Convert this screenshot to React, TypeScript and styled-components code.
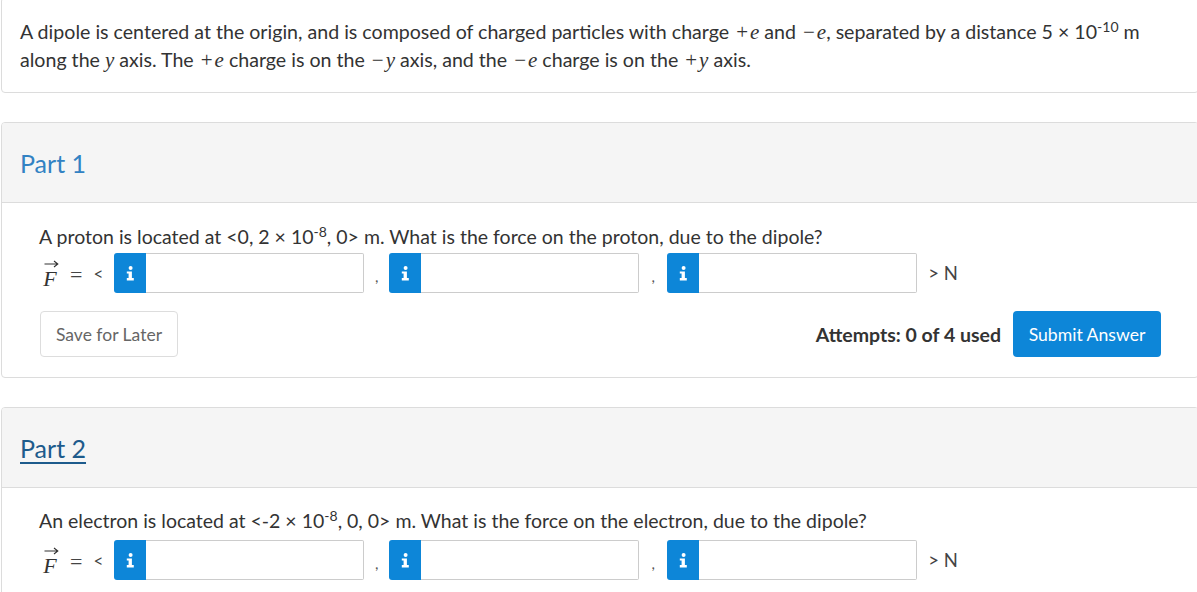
import React from "react";
import styled, { createGlobalStyle } from "styled-components";

const GlobalStyle = createGlobalStyle`
  html, body {
    margin: 0;
    padding: 0;
    background: #ffffff;
    overflow: hidden;
  }
  body {
    font-family: Lato, "Noto Sans", "Liberation Sans", sans-serif;
    color: #333333;
  }
  * { box-sizing: border-box; }
`;

const Page = styled.div`
  width: 1199px;
  padding-left: 1px;
  display: flex;
  flex-direction: column;
  gap: 29px;
`;

const Card = styled.section<{ $lead?: boolean }>`
  width: 1198px;
  border: 1px solid #dcdcdc;
  border-radius: 4px;
  background: #ffffff;
  margin-top: ${(p) => (p.$lead ? "-3px" : "0")};
  overflow: hidden;
`;

const Intro = styled.div`
  padding: 20px 18px 18px 18px;
  font-size: 19.6px;
  line-height: 28px;
`;

const Header = styled.div`
  height: 80px;
  background: #f5f5f5;
  border-bottom: 1px solid #dcdcdc;
  display: flex;
  align-items: center;
  padding: 0 18px;
`;

const PartTitle = styled.h2<{ $link?: boolean }>`
  margin: 0;
  font-weight: 400;
  font-size: 25px;
  line-height: 30px;
  color: ${(p) => (p.$link ? "#1d5b8c" : "#3282c3")};
  text-decoration: ${(p) => (p.$link ? "underline" : "none")};
  text-decoration-thickness: 2px;
  text-underline-offset: 4px;
`;

const Body = styled.div<{ $top?: number }>`
  padding: ${(p) => p.$top ?? 20}px 37px 20px 37px;
  display: flex;
  flex-direction: column;
`;

const Question = styled.p`
  margin: 0;
  font-size: 19.5px;
  line-height: 28px;
`;

const Var = styled.span`
  font-family: "Liberation Serif", "DejaVu Serif", serif;
  font-style: italic;
  font-size: 21px;
`;

const Op = styled.span`
  font-family: "Liberation Serif", "DejaVu Serif", serif;
  font-size: 21px;
  margin: 0 2px 0 2px;
`;

const Sup = styled.sup`
  font-size: 14px;
  line-height: 0;
  vertical-align: 7px;
`;

const AnswerRow = styled.div<{ $gapTop?: number }>`
  margin-top: ${(p) => p.$gapTop ?? 2}px;
  height: 40px;
  display: flex;
  align-items: center;
`;

const VecF = styled.span`
  display: inline-flex;
  flex-direction: column;
  align-items: center;
  margin-left: 2px;
  width: 18px;
  font-family: "Liberation Serif", "DejaVu Serif", serif;
  font-style: italic;
  font-size: 22px;
  line-height: 20px;
  color: #333;
  margin-top: 2px;
`;

const ArrowMark = styled.svg`
  display: block;
  margin-left: 3px;
  margin-bottom: 1px;
`;

const Equals = styled.span`
  font-family: "Liberation Serif", "DejaVu Serif", serif;
  font-size: 22px;
  margin-left: 11px;
  color: #444;
  padding-top: 3px;
`;

const Bracket = styled.span`
  font-size: 17px;
  margin-left: 11px;
  margin-right: 11px;
  color: #444;
`;

const InputGroup = styled.div`
  display: flex;
  width: 250px;
  height: 40px;
`;

const Addon = styled.span`
  width: 32px;
  height: 40px;
  background: #0d86d8;
  border-radius: 3px 0 0 3px;
  display: flex;
  align-items: center;
  justify-content: center;
`;

const Field = styled.input`
  flex: 1;
  min-width: 0;
  height: 40px;
  border: 1px solid #cccccc;
  border-left: none;
  border-radius: 0 2px 2px 0;
  background: #fff;
  font: inherit;
  padding: 0 8px;
  outline: none;
`;

const Sep = styled.span<{ $w: number }>`
  width: ${(p) => p.$w}px;
  text-align: center;
  font-size: 15px;
  color: #555;
  padding-top: 6px;
`;

const Unit = styled.span`
  margin-left: 11px;
  font-size: 18.5px;
  color: #444;
`;

const Actions = styled.div`
  margin-top: 18px;
  display: flex;
  align-items: center;
  justify-content: space-between;
`;

const SaveButton = styled.button`
  width: 138px;
  height: 46px;
  border: 1px solid #dddddd;
  border-radius: 4px;
  background: #fff;
  color: #666;
  font-family: Lato, "Noto Sans", sans-serif;
  font-size: 17.5px;
  margin-left: 1px;
  padding: 0;
`;

const Submit = styled.div`
  display: flex;
  align-items: center;
  gap: 12px;
`;

const Attempts = styled.span`
  font-size: 19.5px;
  font-weight: 700;
  color: #333;
`;

const SubmitButton = styled.button`
  width: 148px;
  height: 46px;
  border: none;
  border-radius: 4px;
  background: #0d86d8;
  color: #fff;
  font-family: Lato, "Noto Sans", sans-serif;
  font-size: 17.6px;
  padding: 0;
`;

const InfoIcon = () => (
  <svg width="9" height="15" viewBox="0 0 9 15" aria-hidden="true">
    <circle cx="4.6" cy="2" r="2" fill="#fff" />
    <path d="M0.8 5.4 H5.9 V12 H7.8 V14.4 H0.8 V12 H2.6 V7.6 H0.8 Z" fill="#fff" />
  </svg>
);

const Input = () => (
  <InputGroup>
    <Addon>
      <InfoIcon />
    </Addon>
    <Field type="text" />
  </InputGroup>
);

const Answer = ({ gapTop }: { gapTop?: number }) => (
  <AnswerRow $gapTop={gapTop}>
    <VecF>
      <ArrowMark width="15" height="8" viewBox="0 0 15 8" aria-hidden="true">
        <path d="M0.5 4 H13.5 M10 1 L13.8 4 L10 7" stroke="#333" strokeWidth="1.1" fill="none" />
      </ArrowMark>
      F
    </VecF>
    <Equals>=</Equals>
    <Bracket>&lt;</Bracket>
    <Input />
    <Sep $w={25}>,</Sep>
    <Input />
    <Sep $w={28}>,</Sep>
    <Input />
    <Unit>&gt; N</Unit>
  </AnswerRow>
);

export default function App() {
  return (
    <>
      <GlobalStyle />
      <Page>
        <Card $lead>
          <Intro>
            A dipole is centered at the origin, and is composed of charged particles with charge{" "}
            <Op>+</Op>
            <Var>e</Var> and <Op>−</Op>
            <Var>e</Var>, separated by a distance 5 × 10<Sup>-10</Sup> m
            <br />
            along the <Var>y</Var> axis. The <Op>+</Op>
            <Var>e</Var> charge is on the <Op>−</Op>
            <Var>y</Var> axis, and the <Op>−</Op>
            <Var>e</Var> charge is on the <Op>+</Op>
            <Var>y</Var> axis.
          </Intro>
        </Card>

        <Card>
          <Header>
            <PartTitle>Part 1</PartTitle>
          </Header>
          <Body $top={20}>
            <Question>
              A proton is located at &lt;0, 2 × 10<Sup>-8</Sup>, 0&gt; m. What is the force on the proton, due to the dipole?
            </Question>
            <Answer />
            <Actions>
              <SaveButton type="button">Save for Later</SaveButton>
              <Submit>
                <Attempts>Attempts: 0 of 4 used</Attempts>
                <SubmitButton type="button">Submit Answer</SubmitButton>
              </Submit>
            </Actions>
          </Body>
        </Card>

        <Card>
          <Header>
            <PartTitle $link>Part 2</PartTitle>
          </Header>
          <Body $top={19}>
            <Question>
              An electron is located at &lt;-2 × 10<Sup>-8</Sup>, 0, 0&gt; m. What is the force on the electron, due to the dipole?
            </Question>
            <Answer gapTop={5} />
          </Body>
        </Card>
      </Page>
    </>
  );
}
